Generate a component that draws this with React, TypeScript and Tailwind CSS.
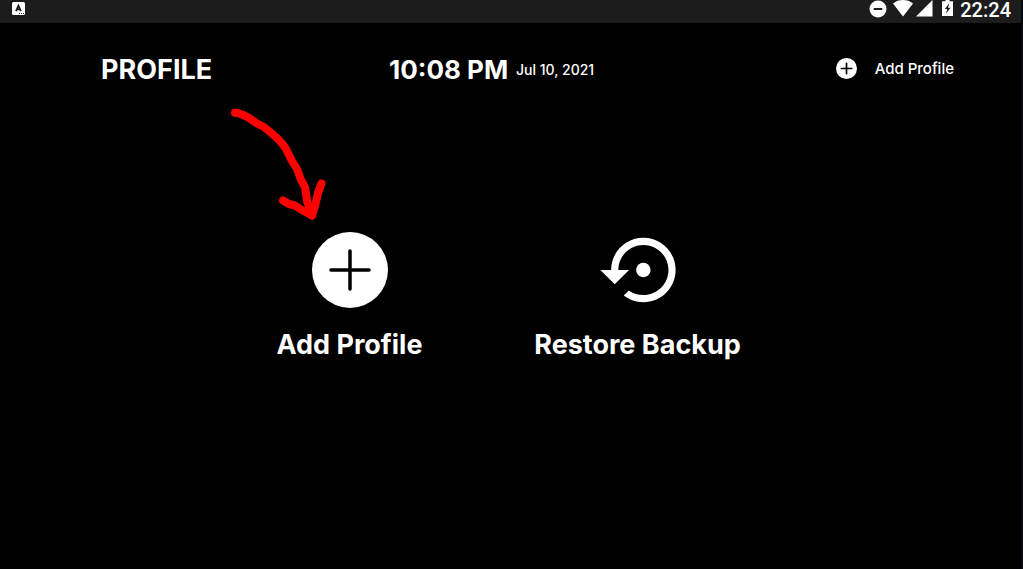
import React from 'react';

const icons = 'fill-white shrink-0';

function StatusBar() {
  return (
    <div className="flex h-[23px] items-start justify-between bg-[#1c1c1c] pl-3 pr-[10px]">
      <svg className="mt-[2px] h-[13px] w-[13px]" viewBox="0 0 13 13" aria-hidden="true">
        <rect width="13" height="13" rx="1.5" fill="#fff" />
        <path d="M4 9.2 6.4 3.6 8.9 9.2M4.8 7.4H8" fill="none" stroke="#1c1c1c" strokeWidth="1.700" />
        <path d="M7 11.500h1M9 11.500h1M11 11.500h1" stroke="#1c1c1c" strokeWidth="1" />
      </svg>
      <div className="flex items-start">
        <svg className={`h-[18px] w-[18px] ${icons}`} viewBox="0 0 18 18" aria-hidden="true">
          <circle cx="9" cy="9" r="8.5" />
          <path d="M4.700 9h8.600" stroke="#1c1c1c" strokeWidth="2" />
        </svg>
        <svg className={`ml-[6px] h-[17px] w-[20px] ${icons}`} viewBox="0 0 20 17" aria-hidden="true">
          <path d="M0 3.400C2.800 1.200 6.200 0 10 0s7.200 1.200 10 3.400L10 16.500z" />
        </svg>
        <svg className={`ml-[3px] h-[17px] w-[17px] ${icons}`} viewBox="0 0 17 17" aria-hidden="true">
          <path d="M0 16.500 16.500 0v16.500z" />
        </svg>
        <svg className={`ml-[9px] h-[17px] w-[11px] ${icons}`} viewBox="0 0 11 17" aria-hidden="true">
          <path d="M3.500 0h4v1.300H11V16H0V1.300h3.500z" />
          <path d="M7.300 3.200 2.800 9h2.500l-1.500 4.800L8.600 7.700H6z" fill="#1c1c1c" />
        </svg>
        <span className="ml-[7px] font-['Roboto',sans-serif] text-[20px] leading-5 font-medium">22:24</span>
      </div>
    </div>
  );
}

function PlusCircle({ className, stroke }: { className: string; stroke: number }) {
  return (
    <svg className={className} viewBox="0 0 76 76" aria-hidden="true">
      <circle cx="38" cy="38" r="38" fill="#fff" />
      <path d="M38 19v38M19 38h38" stroke="#000" strokeWidth={stroke} strokeLinecap="round" />
    </svg>
  );
}

function RestoreIcon() {
  return (
    <svg className="h-[86px] w-[76px] fill-white" viewBox="0 0 21 24" aria-hidden="true">
      <path d="M14 12c0-1.100-.9-2-2-2s-2 .9-2 2 .9 2 2 2 2-.9 2-2zm-2-9c-4.970 0-9 4.030-9 9H0l4 4 4-4H5c0-3.870 3.130-7 7-7s7 3.130 7 7-3.130 7-7 7c-1.510 0-2.910-.49-4.060-1.300l-1.420 1.440C8.040 20.300 9.940 21 12 21c4.970 0 9-4.030 9-9s-4.030-9-9-9z" />
    </svg>
  );
}

// Hand-drawn pointer that sits over the page, aimed at the button
function Arrow() {
  return (
    <svg
      className="pointer-events-none absolute -left-14 -top-[127px] h-[130px] w-[120px]"
      viewBox="0 0 120 130"
      fill="none"
      stroke="#f00"
      strokeWidth="8"
      strokeLinecap="round"
      strokeLinejoin="round"
      aria-hidden="true"
    >
      <path d="M15 12.700C19 12.700 24 15 29 18L37 23.500 44 27 50 32 57 38C61 42 65 46 67 51L72 61 77 69 81 80 85 87 87 101 92 115.500" />
      <path d="M63 100.500 69 104 75 105.500 81 109.500 92 115.500 95 106 98 93 101.500 83.500" />
    </svg>
  );
}

export default function App() {
  return (
    <div className="min-h-screen border-r-2 border-[#020a10] bg-black font-['Inter',sans-serif] text-white">
      <StatusBar />
      <header className="flex items-center pt-7 pl-[101px] pr-[67px]">
        <h1 className="w-72 text-[27px] leading-[38px] font-bold">PROFILE</h1>
        <div className="flex flex-1 items-center">
          <time className="w-[127px] text-[26px] leading-[38px] font-bold whitespace-nowrap">10:08 PM</time>
          <span className="text-[14px] leading-5 font-medium">Jul 10, 2021</span>
        </div>
        <button type="button" className="flex items-center gap-[18px] pb-[3px] text-[15px] leading-5 font-medium">
          <PlusCircle className="h-[21px] w-[21px]" stroke={6} />
          Add Profile
        </button>
      </header>
      <main className="flex justify-center gap-[110px] pt-[138px] pr-1">
        <button type="button" className="relative flex w-[148px] flex-col items-center">
          <Arrow />
          <span className="flex h-[86px] items-center">
            <PlusCircle className="h-[76px] w-[76px]" stroke={3.5} />
          </span>
          <span className="mt-[14px] text-[27px] leading-9 font-bold whitespace-nowrap">Add Profile</span>
        </button>
        <button type="button" className="flex w-[208px] flex-col items-center">
          <RestoreIcon />
          <span className="mt-[14px] text-[27px] leading-9 font-bold whitespace-nowrap">Restore Backup</span>
        </button>
      </main>
    </div>
  );
}
